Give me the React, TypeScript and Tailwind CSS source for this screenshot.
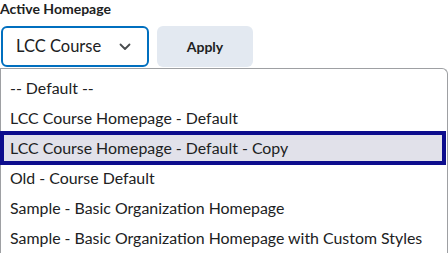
const OPTIONS = [
  '-- Default --',
  'LCC Course Homepage - Default',
  'LCC Course Homepage - Default - Copy',
  'Old - Course Default',
  'Sample - Basic Organization Homepage',
  'Sample - Basic Organization Homepage with Custom Styles',
]

const SELECTED = 2

export default function App() {
  return (
    <div className="w-[448px] h-[257px] overflow-hidden bg-white text-[#202122] font-['Lato',sans-serif]">
      <div className="text-[14px] font-bold leading-[17px]">Active Homepage</div>

      {/* Select + Apply */}
      <div className="flex gap-[8px] mt-[9px] ml-[1px]">
        <div className="flex items-center justify-between w-[148px] h-[41px] rounded-[6px] border-2 border-[#006fbf] pl-[13px] pr-[16px]">
          <span className="text-[16.5px]">LCC Course</span>
          <svg width="12" height="8" viewBox="0 0 12 8" fill="none">
            <polyline points="1.5,1.5 6,6 10.5,1.5" stroke="#494c4e" strokeWidth="1.8" strokeLinecap="round" strokeLinejoin="round" />
          </svg>
        </div>
        <button className="w-[96px] h-[41px] rounded-[6px] bg-[#e3e9f1] text-[14px] font-bold">Apply</button>
      </div>

      {/* Open option list */}
      <div className="mt-[1px] border-t border-l border-r border-[#9ea0a3] rounded-tr-[6px] pt-[4px]">
        {OPTIONS.map((opt, i) =>
          i === SELECTED ? (
            <div
              key={opt}
              className="flex items-center h-[34px] -my-[2px] -ml-px mr-[1px] border-4 border-[#0d0d8d] bg-[#e1e1ea] pl-[6px] text-[15.9px] relative"
            >
              {opt}
            </div>
          ) : (
            <div key={opt} className="flex items-center h-[30px] pl-[9px] text-[15.9px]">
              {opt}
            </div>
          ),
        )}
      </div>
    </div>
  )
}
